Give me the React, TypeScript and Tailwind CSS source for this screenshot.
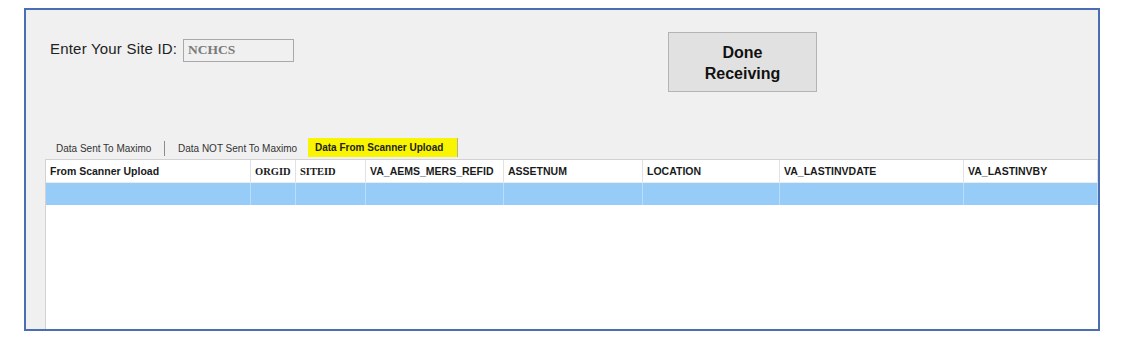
import React from 'react'

const columns = [
    { label: 'From Scanner Upload', width: 'w-[205px]' },
    { label: 'ORGID', width: 'w-[45px]', serif: true },
    { label: 'SITEID', width: 'w-[70px]', serif: true },
    { label: 'VA_AEMS_MERS_REFID', width: 'w-[138px]' },
    { label: 'ASSETNUM', width: 'w-[139px]' },
    { label: 'LOCATION', width: 'w-[137px]' },
    { label: 'VA_LASTINVDATE', width: 'w-[184px]' },
    { label: 'VA_LASTINVBY', width: 'flex-1' },
]

export default function App() {
    return (
        <div className="w-[1127px] h-[340px] bg-white pt-[8px] pl-[24px] font-['Liberation_Sans',Arial,sans-serif]">
            <div className="w-[1076px] h-[323px] border-2 border-[#4a6db3] bg-[#f0f0f0] flex flex-col">
                {/* Top: site id + button */}
                <div className="h-[128px] flex items-start">
                    <div className="w-[642px] pl-[24px] pt-[28px] flex items-center">
                        <span className="w-[133px] text-[15px] tracking-[0.2px] text-[#222] pb-[2px]">Enter Your Site ID:</span>
                        <div className="w-[111px] h-[23px] border border-[#a9a9a9] bg-[#f0f0f0] flex items-center pl-[4px]">
                            <span className="font-['Liberation_Serif',serif] font-bold text-[13.5px] text-[#7a7a7a]">NCHCS</span>
                        </div>
                    </div>
                    <button className="mt-[22px] w-[149px] h-[60px] bg-[#e1e1e1] border border-[#b4b4b4] flex flex-col items-center justify-center pt-[1px] text-[16px] font-bold leading-[21px] text-[#111]">
                        <span>Done</span>
                        <span>Receiving</span>
                    </button>
                </div>

                {/* Tabs */}
                <div className="h-[21px] ml-[19px] flex items-start text-[10px] text-[#333]">
                    <div className="w-[120px] h-[19px] flex items-center pl-[11px] pt-[1px] relative">
                        Data Sent To Maximo
                        <div className="absolute right-0 top-[3px] h-[15px] w-px bg-[#8c8c8c]" />
                    </div>
                    <div className="w-[143px] h-[19px] flex items-center pl-[13px] pt-[1px]">Data NOT Sent To Maximo</div>
                    <div className="w-[150px] h-[19px] flex items-center pl-[7px] bg-[#f9f500] border-r border-[#b5b38a] font-bold text-[#222]">
                        Data From Scanner Upload
                    </div>
                </div>

                {/* Grid */}
                <div className="flex-1 ml-[19px] bg-white border-l border-t border-[#d2d2d2] flex flex-col">
                    <div className="h-[23px] flex border-b border-[#ececec]">
                        {columns.map((c) => (
                            <div
                                key={c.label}
                                className={`${c.width} shrink-0 flex items-center pl-[4px] pt-[1px] border-r border-[#e2e2e2] font-bold text-[#1a1a1a] ${c.serif ? "font-['Liberation_Serif',serif] text-[10.5px]" : 'text-[10.5px]'}`}
                            >
                                {c.label}
                            </div>
                        ))}
                    </div>
                    <div className="h-[22px] flex bg-[#97ccf8]">
                        {columns.map((c) => (
                            <div key={c.label} className={`${c.width} shrink-0 border-r border-[#b9ddfb]`} />
                        ))}
                    </div>
                </div>
            </div>
        </div>
    )
}
